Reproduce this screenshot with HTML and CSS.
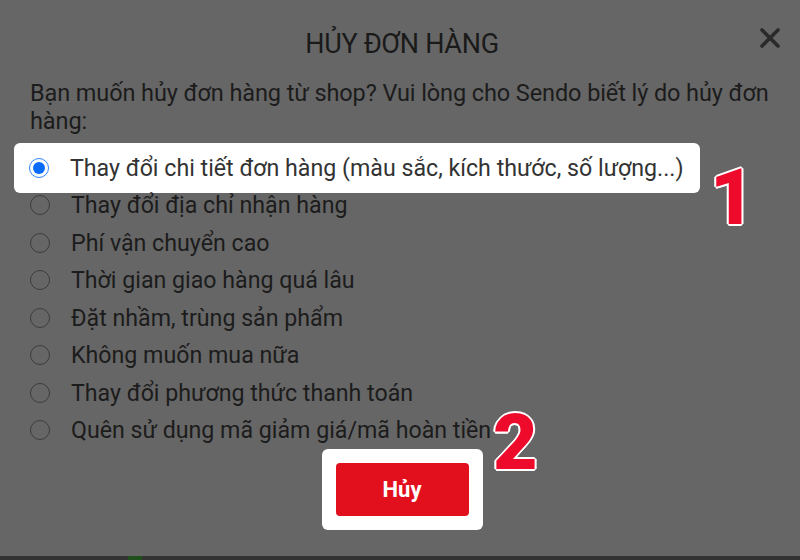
FILE: index.html
```html
<!DOCTYPE html>
<html lang="vi">
<head>
<meta charset="utf-8">
<title>Hủy đơn hàng</title>
<link rel="stylesheet" href="styles.css">
</head>
<body>
<div class="screen">
  <div class="modal">
    <header class="head">
      <h1 class="title">HỦY ĐƠN HÀNG</h1>
      <button class="close" aria-label="Đóng">
        <svg width="22" height="22" viewBox="0 0 22 22"><path d="M3 3 L19 19 M19 3 L3 19" stroke="#2a2a2a" stroke-width="3.6" stroke-linecap="round"/></svg>
      </button>
    </header>
    <p class="question">Bạn muốn hủy đơn hàng từ shop? Vui lòng cho Sendo biết lý do hủy đơn hàng:</p>
    <ul class="reasons">
      <li class="reason selected"><span class="radio on"></span>Thay đổi chi tiết đơn hàng (màu sắc, kích thước, số lượng...)</li>
      <li class="reason"><span class="radio"></span>Thay đổi địa chỉ nhận hàng</li>
      <li class="reason"><span class="radio"></span>Phí vận chuyển cao</li>
      <li class="reason"><span class="radio"></span>Thời gian giao hàng quá lâu</li>
      <li class="reason"><span class="radio"></span>Đặt nhầm, trùng sản phẩm</li>
      <li class="reason"><span class="radio"></span>Không muốn mua nữa</li>
      <li class="reason"><span class="radio"></span>Thay đổi phương thức thanh toán</li>
      <li class="reason"><span class="radio"></span>Quên sử dụng mã giảm giá/mã hoàn tiền</li>
    </ul>
    <div class="footer">
      <div class="btn-wrap"><button class="cancel">Hủy</button></div>
    </div>
    <span class="mark mark1">1</span>
    <span class="mark mark2">2</span>
  </div>
  <div class="bottom-strip"><span class="green"></span></div>
</div>
</body>
</html>
```

FILE: styles.css
```css
* { box-sizing: border-box; }
html, body { margin: 0; padding: 0; }
body {
  width: 800px;
  height: 560px;
  overflow: hidden;
  background: #666666;
  font-family: Roboto, "Noto Sans", "Liberation Sans", sans-serif;
  color: #1c1c1c;
}
.screen {
  height: 560px;
  display: flex;
  flex-direction: column;
}
.modal {
  position: relative;
  flex: 1;
  padding: 0 26px 0 30px;
}
.head {
  position: relative;
  display: flex;
  justify-content: center;
  padding-top: 28px;
}
.title {
  margin: 0;
  font-size: 27px;
  line-height: 32px;
  font-weight: 400;
  color: #1a1a1a;
  letter-spacing: -0.3px;
}
.close {
  position: absolute;
  right: -7px;
  top: 27px;
  width: 22px;
  height: 22px;
  padding: 0;
  border: 0;
  background: none;
}
.close svg { display: block; }
.question {
  margin: 19px 0 14px;
  font-size: 23.5px;
  line-height: 28px;
  color: #1c1c1c;
  letter-spacing: -0.1px;
}
.reasons {
  list-style: none;
  margin: 0;
  padding: 0;
}
.reason {
  display: flex;
  align-items: center;
  height: 37.5px;
  font-size: 23.2px;
  color: #1c1c1c;
}
.reason.selected {
  width: fit-content;
  height: 49.5px;
  margin: -6px 0 -6px -16px;
  padding: 0 17px 0 15px;
  background: #ffffff;
  border-radius: 6px;
  color: #333333;
}
.radio {
  flex: none;
  width: 20px;
  height: 20px;
  margin-right: 21px;
  border: 1.5px solid #3c3c3c;
  border-radius: 50%;
  display: flex;
  align-items: center;
  justify-content: center;
}
.radio.on {
  border-color: #2f86ff;
}
.radio.on::after {
  content: "";
  width: 12px;
  height: 12px;
  border-radius: 50%;
  background: #0a6cff;
}
.footer {
  display: flex;
  justify-content: center;
}
.btn-wrap {
  background: #ffffff;
  border-radius: 6px;
  padding: 14px;
}
.cancel {
  display: block;
  width: 133px;
  height: 53px;
  border: 0;
  border-radius: 4px;
  background: #e2101d;
  color: #ffffff;
  font-family: Roboto, "Noto Sans", sans-serif;
  font-weight: 700;
  font-size: 22px;
}
.mark {
  position: absolute;
  font-family: Roboto, "Liberation Sans", sans-serif;
  font-weight: 900;
  font-size: 77px;
  line-height: 77px;
  color: #ee0a2a;
  text-shadow:
    1.5px 0 0 #fff, -1.5px 0 0 #fff, 0 1.5px 0 #fff, 0 -1.5px 0 #fff,
    1px 1px 0 #fff, -1px 1px 0 #fff, 1px -1px 0 #fff, -1px -1px 0 #fff,
    2px 0 0 #fff, -2px 0 0 #fff, 0 2px 0 #fff, 0 -2px 0 #fff;
}
.mark1 { left: 710px; top: 160px; }
.mark2 { left: 493px; top: 405px; }
.bottom-strip {
  height: 4px;
  background: #333333;
  position: relative;
}
.green {
  position: absolute;
  left: 128px;
  top: 0;
  width: 14px;
  height: 4px;
  background: #1f4f1a;
}
```
